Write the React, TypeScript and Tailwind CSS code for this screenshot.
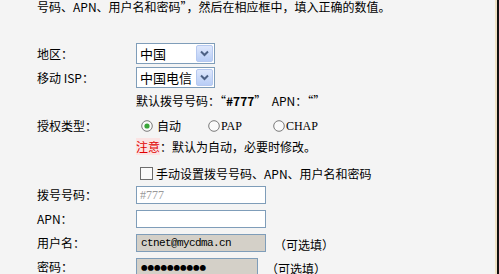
import React from 'react';

const font = { fontFamily: '"Noto Sans CJK SC", "Liberation Sans", sans-serif' };

const Chevron: React.FC = () => (
  <div className="w-[17px] h-[17px] mr-[1px] shrink-0 flex items-center justify-center rounded-[2px] border border-[#b6c9f0] bg-gradient-to-b from-[#dfe8fc] to-[#b8cdf6]">
    <svg width="9" height="7" viewBox="0 0 9 7">
      <path d="M1 1.5 L4.5 5 L8 1.5" fill="none" stroke="#4d6185" strokeWidth="2" />
    </svg>
  </div>
);

const Select: React.FC<{ value: string }> = ({ value }) => (
  <div className="w-[79px] h-[21px] border border-[#7f9db9] bg-white flex items-center justify-between pl-[3px]">
    <span className="text-[13px] leading-none text-black whitespace-nowrap">{value}</span>
    <Chevron />
  </div>
);

const Radio: React.FC<{ checked?: boolean }> = ({ checked }) => (
  <svg width="12" height="12" viewBox="0 0 12 12" className="shrink-0">
    <circle cx="6" cy="6" r="5.3" fill="#fafafa" stroke="#7a7a7a" strokeWidth="1" />
    {checked && <circle cx="6" cy="6" r="2.6" fill="#3aa53a" />}
  </svg>
);

const Row: React.FC<{ label?: string; h: string; children?: React.ReactNode }> = ({ label, h, children }) => (
  <div className={`flex items-center ${h}`}>
    <div className="w-[99px] shrink-0 text-[12px] text-black whitespace-nowrap">{label}</div>
    <div className="flex items-center">{children}</div>
  </div>
);

const Optional: React.FC = () => <span className="text-[12px] text-black">（可选填）</span>;

export default function App() {
  return (
    <div className="w-[499px] h-[274px] flex overflow-hidden" style={font}>
      <div className="flex-1 bg-[#f4f4f4] pl-[37px]">
        <div className="h-[15px] text-[12px] leading-[14px] text-black whitespace-nowrap">
          号码、APN、用户名和密码”，然后在相应框中，填入正确的数值。
        </div>

        <div className="h-[28px]" />

        <Row label="地区：" h="h-[21px]">
          <Select value="中国" />
        </Row>
        <div className="h-[3px]" />
        <Row label="移动 ISP：" h="h-[21px]">
          <Select value="中国电信" />
        </Row>

        <Row h="h-[26px]">
          <span className="text-[12px] text-black">
            默认拨号号码：“<b className="font-bold">#777</b>”&nbsp;&nbsp;APN：“”
          </span>
        </Row>

        <Row label="授权类型：" h="h-[24px]">
          <div className="flex items-center text-[12px] text-black">
            <span className="ml-[5px]"><Radio checked /></span>
            <span className="ml-[4px]">自动</span>
            <span className="ml-[27px]"><Radio /></span>
            <span className="ml-[1px] font-['Liberation_Serif'] text-[12px]">PAP</span>
            <span className="ml-[31px]"><Radio /></span>
            <span className="ml-[1px] font-['Liberation_Serif'] text-[12px]">CHAP</span>
          </div>
        </Row>

        <Row h="h-[17px]">
          <span className="text-[12px] text-black">
            <span className="text-[#e00000] bg-[#fbe3e3]">注意</span>：默认为自动，必要时修改。
          </span>
        </Row>

        <div className="h-[6px]" />
        <Row h="h-[25px]">
          <div className="flex items-center ml-[4px]">
            <div className="w-[13px] h-[13px] border border-[#6d6d6d] bg-[#fafafa]" />
            <span className="ml-[3px] text-[12px] text-black">手动设置拨号号码、APN、用户名和密码</span>
          </div>
        </Row>

        <Row label="拨号号码：" h="h-[18px]">
          <div className="w-[130px] h-[18px] border border-[#7f9db9] bg-white flex items-center pl-[3px] text-[12px] text-[#999] font-['Liberation_Serif']">
            #777
          </div>
        </Row>
        <div className="h-[6px]" />
        <Row label="APN：" h="h-[18px]">
          <div className="w-[130px] h-[18px] border border-[#7f9db9] bg-white" />
        </Row>
        <div className="h-[6px]" />
        <Row label="用户名：" h="h-[18px]">
          <div className="w-[130px] h-[18px] border border-[#7f9db9] bg-[#d4d0c8] flex items-center pl-[4px] text-[11px] tracking-[-0.6px] text-black font-['Liberation_Mono']">
            ctnet@mycdma.cn
          </div>
          <span className="ml-[8px]"><Optional /></span>
        </Row>
        <div className="h-[6px]" />
        <Row label="密码：" h="h-[18px]">
          <div className="w-[122px] h-[18px] border border-[#7f9db9] bg-[#d4d0c8] flex items-center pl-[4px] text-[6.5px] leading-none text-black whitespace-nowrap">
            ●●●●●●●●●●
          </div>
          <span className="ml-[8px]"><Optional /></span>
        </Row>
      </div>
      <div className="w-[2px] bg-[#efe2c4]" />
      <div className="w-[2px] bg-[#111]" />
    </div>
  );
}
